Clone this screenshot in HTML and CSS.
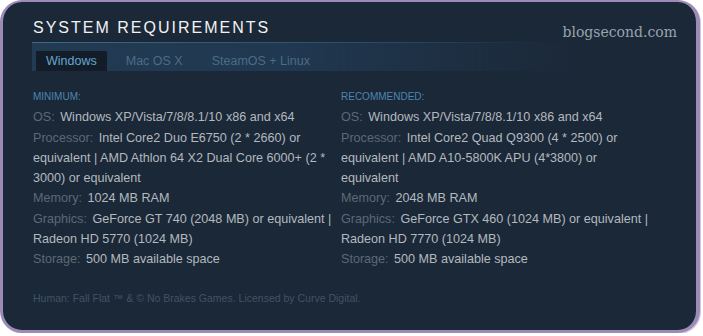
FILE: index.html
```html
<!DOCTYPE html>
<html lang="en">
<head>
<meta charset="utf-8">
<title>System Requirements</title>
<link rel="stylesheet" href="styles.css">
</head>
<body>
<div class="frame">
  <div class="card">
    <div class="head">
      <h2 class="title">System Requirements</h2>
      <span class="watermark">blogsecond.com</span>
    </div>
    <div class="tabs">
      <span class="tab active">Windows</span>
      <span class="tab">Mac OS X</span>
      <span class="tab">SteamOS + Linux</span>
    </div>
    <div class="cols">
      <div class="col">
        <div class="sect">Minimum:</div>
        <ul class="reqs">
          <li><span class="lbl">OS:</span> Windows XP/Vista/7/8/8.1/10 x86 and x64</li>
          <li><span class="lbl">Processor:</span> Intel Core2 Duo E6750 (2 * 2660) or equivalent | AMD Athlon 64 X2 Dual Core 6000+ (2 * 3000) or equivalent</li>
          <li><span class="lbl">Memory:</span> 1024 MB RAM</li>
          <li><span class="lbl">Graphics:</span> GeForce GT 740 (2048 MB) or equivalent | Radeon HD 5770 (1024 MB)</li>
          <li><span class="lbl">Storage:</span> 500 MB available space</li>
        </ul>
      </div>
      <div class="col">
        <div class="sect">Recommended:</div>
        <ul class="reqs">
          <li><span class="lbl">OS:</span> Windows XP/Vista/7/8/8.1/10 x86 and x64</li>
          <li><span class="lbl">Processor:</span> Intel Core2 Quad Q9300 (4 * 2500) or equivalent | AMD A10-5800K APU (4*3800) or equivalent</li>
          <li><span class="lbl">Memory:</span> 2048 MB RAM</li>
          <li><span class="lbl">Graphics:</span> GeForce GTX 460 (1024 MB) or equivalent | Radeon HD 7770 (1024 MB)</li>
          <li><span class="lbl">Storage:</span> 500 MB available space</li>
        </ul>
      </div>
    </div>
    <p class="legal">Human: Fall Flat ™ &amp; © No Brakes Games. Licensed by Curve Digital.</p>
  </div>
</div>
</body>
</html>
```
FILE: styles.css
```css
* { box-sizing: border-box; }
html, body { margin: 0; padding: 0; background: #ffffff; }

.frame {
  width: 700px;
  height: 333px;
  border-style: solid;
  border-color: #9d8bb7;
  border-width: 2px 4px 3px 3px;
  border-radius: 22px;
  background: #1b2838;
  box-shadow: 1px 1px 0 #d3c9e0;
  overflow: hidden;
}

.card {
  padding: 16px 0 0 29px;
  font-family: "Liberation Sans", Arial, sans-serif;
}

.head {
  display: flex;
  justify-content: space-between;
  align-items: flex-start;
  padding-right: 19px;
}

.title {
  margin: 0;
  font-family: "Liberation Sans", Arial, sans-serif;
  font-weight: normal;
  font-size: 16px;
  line-height: 20px;
  letter-spacing: 2px;
  text-transform: uppercase;
  color: #f2f2f2;
  padding: 0 0 4px 1px;
}

.watermark {
  font-family: "DejaVu Serif", "Liberation Serif", serif;
  font-size: 14px;
  line-height: 20px;
  margin-top: 4px;
  color: #9aa3ac;
}

.tabs {
  display: flex;
  gap: 9px;
  height: 29px;
  padding: 8px 0 0 4px;
  border-top: 1px solid #2f5672;
  border-image: linear-gradient(90deg, #3a6a8a 0%, #2c5270 45%, rgba(44, 82, 112, 0) 80%) 1;
  background: linear-gradient(90deg, #223a52 0%, #203850 40%, rgba(27, 40, 56, 0) 85%);
  width: 640px;
}

.tab {
  font-size: 12.5px;
  line-height: 20px;
  padding: 0 10px;
  color: #4b6c86;
}

.tab.active {
  background: #131d29;
  color: #66a7cf;
}

.cols {
  display: grid;
  grid-template-columns: 300px 312px;
  column-gap: 8px;
  padding: 19px 0 0 1px;
}

.sect {
  font-size: 10px;
  line-height: 14px;
  text-transform: uppercase;
  color: #4c86b0;
  margin-bottom: 3px;
}

.reqs {
  list-style: none;
  margin: 0;
  padding: 0;
}

.reqs li {
  font-size: 12.6px;
  line-height: 20px;
  color: #b3b9bf;
  margin-bottom: 0.5px;
}

.lbl {
  color: #5d6974;
  margin-right: 2px;
}

.legal {
  margin: 21px 0 0 1px;
  font-size: 10.5px;
  line-height: 14px;
  color: #435262;
}
```
